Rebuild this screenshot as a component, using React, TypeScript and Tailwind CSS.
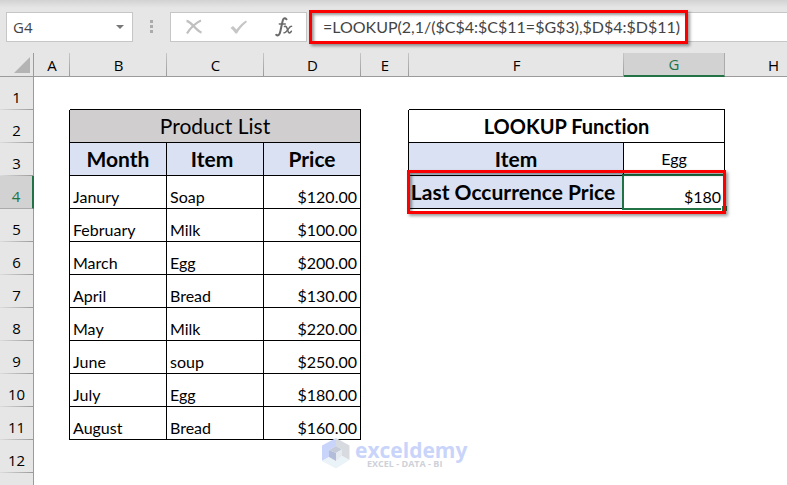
import clsx from 'clsx';

interface Product {
    month: string;
    item: string;
    price: string;
}

const products: Product[] = [
    { month: 'Janury', item: 'Soap', price: '$120.00' },
    { month: 'February', item: 'Milk', price: '$100.00' },
    { month: 'March', item: 'Egg', price: '$200.00' },
    { month: 'April', item: 'Bread', price: '$130.00' },
    { month: 'May', item: 'Milk', price: '$220.00' },
    { month: 'June', item: 'soup', price: '$250.00' },
    { month: 'July', item: 'Egg', price: '$180.00' },
    { month: 'August', item: 'Bread', price: '$160.00' },
];

const columns = ['A', 'B', 'C', 'D', 'E', 'F', 'G', 'H'];

const dataCell = 'border-r border-b border-black px-[3px] pb-px align-bottom';
const titleCell = 'border-r border-b border-black leading-6';
const headingCell = 'border-r border-b border-black bg-[#d9e1f2] text-[21px] leading-6 font-bold';

const RowHeader = ({ row, active = false }: { row: number; active?: boolean }) => (
    <th
        scope="row"
        className={clsx(
            'h-[33px] bg-right-bottom bg-no-repeat align-bottom font-["Open_Sans",sans-serif] text-[15px] leading-6 font-normal',
            active
                ? 'border-r-2 border-b border-r-[#217346] border-b-[#ababab] bg-[#d2d2d2] text-[#217346]'
                : 'border-r border-[#9b9b9b] bg-[#e6e6e6] bg-[linear-gradient(to_right,#dcdcdc,#9b9b9b)] bg-[length:100%_1px] pb-px'
        )}
    >
        {row}
    </th>
);

const FormulaBar = () => (
    <div className="flex h-[53px] shrink-0 items-center bg-linear-to-b from-[#d2d2d2] to-[#e6e6e6] to-15% pl-[6px]">
        {/* Name box */}
        <div className="flex h-[30px] w-[127px] shrink-0 items-center border border-[#c6c6c6] bg-white">
            <input
                aria-label="Name box"
                defaultValue="G4"
                className="w-full min-w-0 pl-[6px] font-['Open_Sans',sans-serif] text-[15px] text-[#444444] outline-none"
            />
            <button aria-label="Show names" className="flex h-full w-6 shrink-0 items-center justify-center">
                <svg width="8" height="4" viewBox="0 0 8 4">
                    <path d="M0 0h8L4 4z" fill="#777777" />
                </svg>
            </button>
        </div>

        <svg className="mx-4 shrink-0" width="5" height="14" viewBox="0 0 5 14">
            <path d="M1 0h3v3H1zM1 5h3v3H1zM1 10h3v3H1z" fill="#ababab" />
        </svg>

        {/* Cancel, enter and insert function */}
        <div className="flex h-[30px] w-[137px] shrink-0 items-center border border-[#c6c6c6] bg-white">
            <button aria-label="Cancel" className="flex flex-1 justify-center">
                <svg width="16" height="16" viewBox="0 0 16 16" fill="none" stroke="#c0c0c0">
                    <path d="M0.500 2C3 2 5.500 5 8 7.500C10.500 10 13 13 15.500 13.500" strokeWidth="2.400" />
                    <path d="M15 1.500C11 3 4 9 1 14.500" strokeWidth="2.200" />
                </svg>
            </button>
            <button aria-label="Enter" className="flex flex-1 justify-center">
                <svg width="18" height="16" viewBox="0 0 18 16">
                    <path d="M0.500 9L3 7L6.500 10.500C9 7 12.500 3.500 16 1.500L17 3C13 6 9.500 10 7 14.500H5.500C4 12.500 2.500 10.500 0.500 9z" fill="#c6c6c6" />
                </svg>
            </button>
            <button aria-label="Insert function" className="flex flex-1 justify-center">
                <svg width="18" height="20" viewBox="0 0 18 20" fill="none" stroke="#6a6a6a" strokeLinecap="round">
                    <path d="M11.500 2.300C9.800 0.300 8.200 1.200 7.500 4.500L5.300 14.500C4.700 17.800 3 19.300 1.200 17.800" strokeWidth="2" />
                    <path d="M4.300 7H10.300" strokeWidth="1.400" />
                    <path d="M9.500 9.500C12.500 8 12.500 15.500 14 15.800C15 16 15.800 15.200 16.300 14.300" strokeWidth="1.600" />
                    <path d="M16.600 9.300C14 8.500 12 16.500 9 15.800" strokeWidth="1.400" />
                </svg>
            </button>
        </div>

        {/* Formula */}
        <div className="relative ml-1 h-[30px] min-w-0 flex-1 border-y border-[#c6c6c6] bg-white">
            <input
                aria-label="Formula bar"
                defaultValue="=LOOKUP(2,1/($C$4:$C$11=$G$3),$D$4:$D$11)"
                className="h-full w-full pb-px pl-3 text-base text-[#444444] outline-none"
            />
            <div className="pointer-events-none absolute -top-[3px] -left-[2px] h-[34px] w-[379px] border-3 border-[#fb0000] shadow-[2px_2px_3px_rgba(0,0,0,0.4),inset_2px_2px_3px_rgba(0,0,0,0.4)]" />
        </div>
    </div>
);

const Watermark = () => (
    <div className="pointer-events-none absolute top-[438px] left-[322px] flex items-center gap-[5px] font-['Open_Sans',sans-serif] font-bold">
        <svg width="28" height="31" viewBox="0 0 28 31">
            <path d="M14 0L27.500 7.500V22L20 18V11.500L14 8z" fill="#d7dbe0" />
            <path d="M14 0L0 7.500V23L7 19V12L14 8z" fill="#c9d4fa" />
            <path d="M0 23L7 19L14 23L20 18L27.500 22L14 30.500z" fill="#eaf3f7" />
            <path d="M14 8L20 11.500L14 15L7 12z" fill="#c5cbd9" />
            <path d="M7 12L14 15V23L7 19z" fill="#b3bdd9" />
            <path d="M14 15L20 11.500V18L14 23z" fill="#e5eaf0" />
        </svg>
        <div>
            <div className="text-[21px] leading-5 text-[#c9d4fa]">exceldemy</div>
            <div className="pl-3 text-[9px] leading-2 text-[#cdd1d8]">EXCEL - DATA - BI</div>
        </div>
    </div>
);

const App = () => {
    return (
        <div className="relative flex h-screen flex-col overflow-hidden bg-white font-[Lato,sans-serif] text-base leading-5 text-black [font-variant-ligatures:none]">
            <FormulaBar />

            <table className="w-full min-w-[822px] table-fixed border-separate border-spacing-0">
                <colgroup>
                    <col className="w-[34px]" />
                    <col className="w-[36px]" />
                    <col className="w-[97px]" />
                    <col className="w-[97px]" />
                    <col className="w-[97px]" />
                    <col className="w-[48px]" />
                    <col className="w-[215px]" />
                    <col className="w-[101px]" />
                    <col />
                </colgroup>
                <thead>
                    <tr className="h-6 bg-[#e6e6e6] font-['Open_Sans',sans-serif] text-[15px]">
                        <td className="border-r border-b border-[#9b9b9b]">
                            <svg className="ml-auto mr-[3px]" width="16" height="16" viewBox="0 0 16 16">
                                <path d="M16 0v16H0z" fill="#b4b4b4" />
                            </svg>
                        </td>
                        {columns.map((column) => (
                            <th
                                key={column}
                                scope="col"
                                className={clsx(
                                    'bg-right bg-no-repeat font-normal',
                                    column === 'G'
                                        ? 'border-r border-b-2 border-r-[#ababab] border-b-[#217346] bg-[#d2d2d2] text-[#217346]'
                                        : 'border-b border-[#9b9b9b] bg-[linear-gradient(to_bottom,#c6c6c6,#9b9b9b)] bg-[length:1px_100%]'
                                )}
                            >
                                {column}
                            </th>
                        ))}
                    </tr>
                </thead>
                <tbody>
                    <tr>
                        <RowHeader row={1} />
                        <td />
                        <td colSpan={3} className="border-b border-black" />
                        <td />
                        <td colSpan={2} className="border-b border-black" />
                        <td />
                    </tr>
                    <tr>
                        <RowHeader row={2} />
                        <td className="border-r border-black" />
                        <th colSpan={3} className={clsx(titleCell, 'bg-[#d0cece] text-[21px] font-normal')}>
                            Product List
                        </th>
                        <td className="border-r border-black" />
                        <th colSpan={2} className={clsx(titleCell, 'text-xl font-bold')}>
                            LOOKUP Function
                        </th>
                        <td />
                    </tr>
                    <tr>
                        <RowHeader row={3} />
                        <td className="border-r border-black" />
                        <th className={headingCell}>Month</th>
                        <th className={clsx(headingCell, 'pr-[6px]')}>Item</th>
                        <th className={headingCell}>Price</th>
                        <td className="border-r border-black" />
                        <th className={headingCell}>Item</th>
                        <td className="border-r border-b border-black text-center">Egg</td>
                        <td />
                    </tr>
                    {products.map((product, index) => (
                        <tr key={product.month}>
                            <RowHeader row={index + 4} active={index === 0} />
                            <td className="border-r border-black" />
                            <td className={dataCell}>{product.month}</td>
                            <td className={dataCell}>{product.item}</td>
                            <td className={clsx(dataCell, 'text-right')}>{product.price}</td>
                            {index === 0 ? (
                                <>
                                    <td className="border-r border-black" />
                                    <th className={clsx(headingCell, 'relative pr-[6px] whitespace-nowrap')}>
                                        Last Occurrence Price
                                        {/* Callout around F4:G4 */}
                                        <div className="pointer-events-none absolute -top-[6px] -left-[2px] z-10 h-[44px] w-[319px] border-3 border-[#fb0000] shadow-[2px_2px_3px_rgba(0,0,0,0.4),inset_2px_2px_3px_rgba(0,0,0,0.4)]" />
                                    </th>
                                    <td className="relative pr-1 pb-[2px] text-right align-bottom">
                                        $180
                                        <div className="absolute -top-[2px] right-0 -bottom-px -left-[2px] border-2 border-[#217346]" />
                                        <div className="absolute -right-[2px] -bottom-[2px] size-[6px] border-t border-l border-white bg-[#217346]" />
                                    </td>
                                    <td />
                                </>
                            ) : (
                                <td colSpan={4} />
                            )}
                        </tr>
                    ))}
                    <tr>
                        <RowHeader row={12} />
                        <td colSpan={8} />
                    </tr>
                    {/* Partly visible row below the last one */}
                    <tr>
                        <td className="h-[33px] border-r border-[#9b9b9b] bg-[#e6e6e6]" />
                        <td colSpan={8} />
                    </tr>
                </tbody>
            </table>

            <Watermark />
        </div>
    );
};

export default App;
